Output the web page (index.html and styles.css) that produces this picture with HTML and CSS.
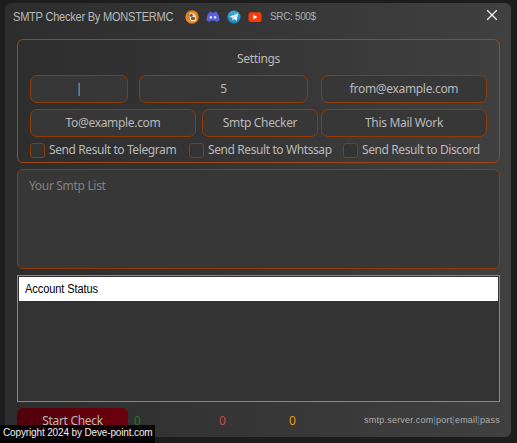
FILE: index.html
```html
<!DOCTYPE html>
<html lang="en">
<head>
<meta charset="utf-8">
<title>SMTP Checker</title>
<link rel="stylesheet" href="styles.css">
</head>
<body>
<main class="window">
  <header class="titlebar">
    <h1 class="title"><span class="narrow">SMTP Checker By MONSTERMC</span></h1>
    <nav class="links">
      <svg width="14" height="14" viewBox="0 0 14 14"><circle cx="7" cy="7" r="6.7" fill="#ee8014"/><path d="M4 3h4.300l2 2v1l.7.7v3.500l-1 1H5L3.700 10V3.500z" fill="#f1e5d6"/><path d="M5.300 4.500h2v1.700h-2zM6.500 7.500h3v1.900h-3z" fill="#9c581d" stroke="#4e3928" stroke-width=".7"/><path d="M4 3v6l1.500 2" fill="none" stroke="#534537" stroke-width=".7"/></svg>
      <svg width="14" height="14" viewBox="0 0 14 14"><path d="M3 2.200l2-.7.6 1h2.800l.6-1 2 .7c1.600 2.500 2.500 5.200 2.500 8.200L10.200 12l-.9-1.200H4.700L3.800 12 .5 10.400C.5 7.400 1.400 4.700 3 2.200z" fill="#5961d9"/><ellipse cx="4.900" cy="7.300" rx="1.200" ry="1.400" fill="#dfe0fa"/><ellipse cx="9.100" cy="7.300" rx="1.200" ry="1.400" fill="#dfe0fa"/></svg>
      <svg width="14" height="14" viewBox="0 0 14 14"><defs><linearGradient id="sky" x2="0" y2="1"><stop stop-color="#3badde"/><stop offset="1" stop-color="#1685bb"/></linearGradient></defs><circle cx="7" cy="7" r="6.500" fill="url(#sky)"/><path d="M2.500 6.800l8.500-3.500-1.400 7.700-2.500-1.900-1.400 1.300-.4-2.700z" fill="#f0f7fa"/><path d="M5.300 7.700l4-3-3 3.600-.6 2z" fill="#9ac5d8"/></svg>
      <svg width="14" height="14" viewBox="0 0 14 14"><rect x=".5" y="2.200" width="13" height="9.800" rx="2.200" fill="#f93b08"/><path d="M5.400 4.600v4.800L9.400 7z" fill="#fff"/></svg>
    </nav>
    <span class="price">SRC: 500$</span>
    <svg class="close" width="12" height="12" viewBox="0 0 12 12"><path d="M1.200 1.200l9.600 9.600M10.800 1.200l-9.600 9.600" stroke="#f2f2f2" stroke-width="1.300"/></svg>
  </header>

  <section class="settings">
    <h2 class="heading">Settings</h2>
    <div class="fields fields-top">
      <div class="field"><span class="caret">|</span></div>
      <div class="field">5</div>
      <div class="field">from@example.com</div>
    </div>
    <div class="fields fields-bottom">
      <div class="field">To@example.com</div>
      <div class="field">Smtp Checker</div>
      <div class="field">This Mail Work</div>
    </div>
    <div class="checks">
      <label class="check"><i class="box"></i><span>Send Result to Telegram</span></label>
      <label class="check"><i class="box"></i><span>Send Result to Whtssap</span></label>
      <label class="check"><i class="box"></i><span>Send Result to Discord</span></label>
    </div>
  </section>

  <section class="list">Your Smtp List</section>

  <section class="table"><div class="table-head"><span class="narrow">Account Status</span></div></section>

  <footer class="footer">
    <div class="start">Start Check</div>
    <span class="count good">0</span>
    <span class="count bad">0</span>
    <span class="count warn">0</span>
    <span class="format">smtp.server.com<b>|</b>port<b>|</b>email<b>|</b>pass</span>
  </footer>
</main>
<div class="copyright">Copyright 2024 by Deve-point.com</div>
</body>
</html>
```
FILE: styles.css
```css
* { box-sizing: border-box; }
body {
  margin: 0;
  width: 517px;
  height: 443px;
  padding: 3px 6px 6px 5px;
  overflow: hidden;
  background: #1d1d1d;
  color: #b9b9b9;
  font: 12px/16px "Noto Sans", sans-serif;
  letter-spacing: -.32px;
  white-space: nowrap;
}
h1, h2 { margin: 0; font-weight: 400; }
.narrow { display: inline-block; transform: scaleX(.92); transform-origin: left; }
.window {
  height: 434px;
  padding: 0 11px 0 12px;
  border-radius: 6px;
  background: linear-gradient(90deg, #2d2d2d, #363636 50%, #404040);
}
.titlebar {
  display: flex;
  align-items: center;
  height: 27px;
  margin: 0 2px 9px -4px;
}
.title { width: 172px; font: 12px/16px "Liberation Sans", sans-serif; letter-spacing: -.25px; }
.links { display: flex; gap: 7px; }
.price { margin-left: 8px; font: 10px/14px "Liberation Sans", sans-serif; letter-spacing: -.35px; color: #a9adb3; }
.close { margin: -3px 0 0 auto; }
.settings {
  height: 124px;
  padding: 11px 12px 0;
  border: 1px solid #a04a10;
  border-radius: 6px;
}
.heading { font-size: 12px; line-height: 16px; text-align: center; margin-bottom: 8px; }
.fields { display: grid; height: 28px; margin-bottom: 6px; }
.fields-top { grid-template-columns: 98px 169px 166px; column-gap: 11px; }
.fields-top .field:last-child { margin: 0 -2px 0 2px; }
.fields-bottom { grid-template-columns: 166px 116px 166px; column-gap: 6px; }
.fields-bottom .field:last-child { margin: 0 3px 0 -3px; width: 166px; }
.field {
  border: 1px solid #8e3c04;
  border-radius: 7px;
  background: #373737;
  text-align: center;
  line-height: 26px;
}
.caret { color: #9bb99b; }
.checks { display: grid; grid-template-columns: 159px 154px 1fr; margin-top: -1px; letter-spacing: -.4px; }
.check { display: flex; align-items: center; gap: 4px; }
.box { width: 15px; height: 15px; border: 1px solid #8e3c04; border-radius: 3px; background: #333; }
.list {
  height: 100px;
  margin-top: 6px;
  padding: 8px 11px;
  border: 1px solid #8e3c04;
  border-radius: 6px;
  background: #373737;
  color: #828282;
}
.table {
  height: 127px;
  margin-top: 6px;
  padding: 1px;
  border: 1px solid #83878f;
  background: #333;
}
.table-head {
  height: 24px;
  padding-left: 6px;
  background: #fff;
  color: #000;
  font: 12px/24px "Liberation Sans", sans-serif;
  letter-spacing: -.1px;
}
.footer { display: grid; grid-template-columns: 111px 91px 70px 75px 1fr; height: 29px; padding-top: 6px; }
.start {
  height: 29px;
  border-radius: 6px;
  background: linear-gradient(90deg, #50000c, #6b000d);
  text-align: center;
  line-height: 25px;
}
.count { line-height: 25px; }
.good { padding-left: 6px; color: #187b18; }
.bad { color: #c64a4a; }
.warn { color: #e69a19; }
.format { text-align: right; font: 9px/25px "Liberation Sans", sans-serif; letter-spacing: .22px; color: #adadad; }
.format b { font-weight: 400; color: #5685bd; }
.copyright {
  position: absolute;
  left: 0;
  bottom: 0;
  width: 155px;
  height: 18px;
  padding-left: 3px;
  background: rgba(0, 0, 0, .86);
  color: #eee;
  font: 10px/16px "Liberation Sans", sans-serif;
  letter-spacing: -.14px;
}
```
